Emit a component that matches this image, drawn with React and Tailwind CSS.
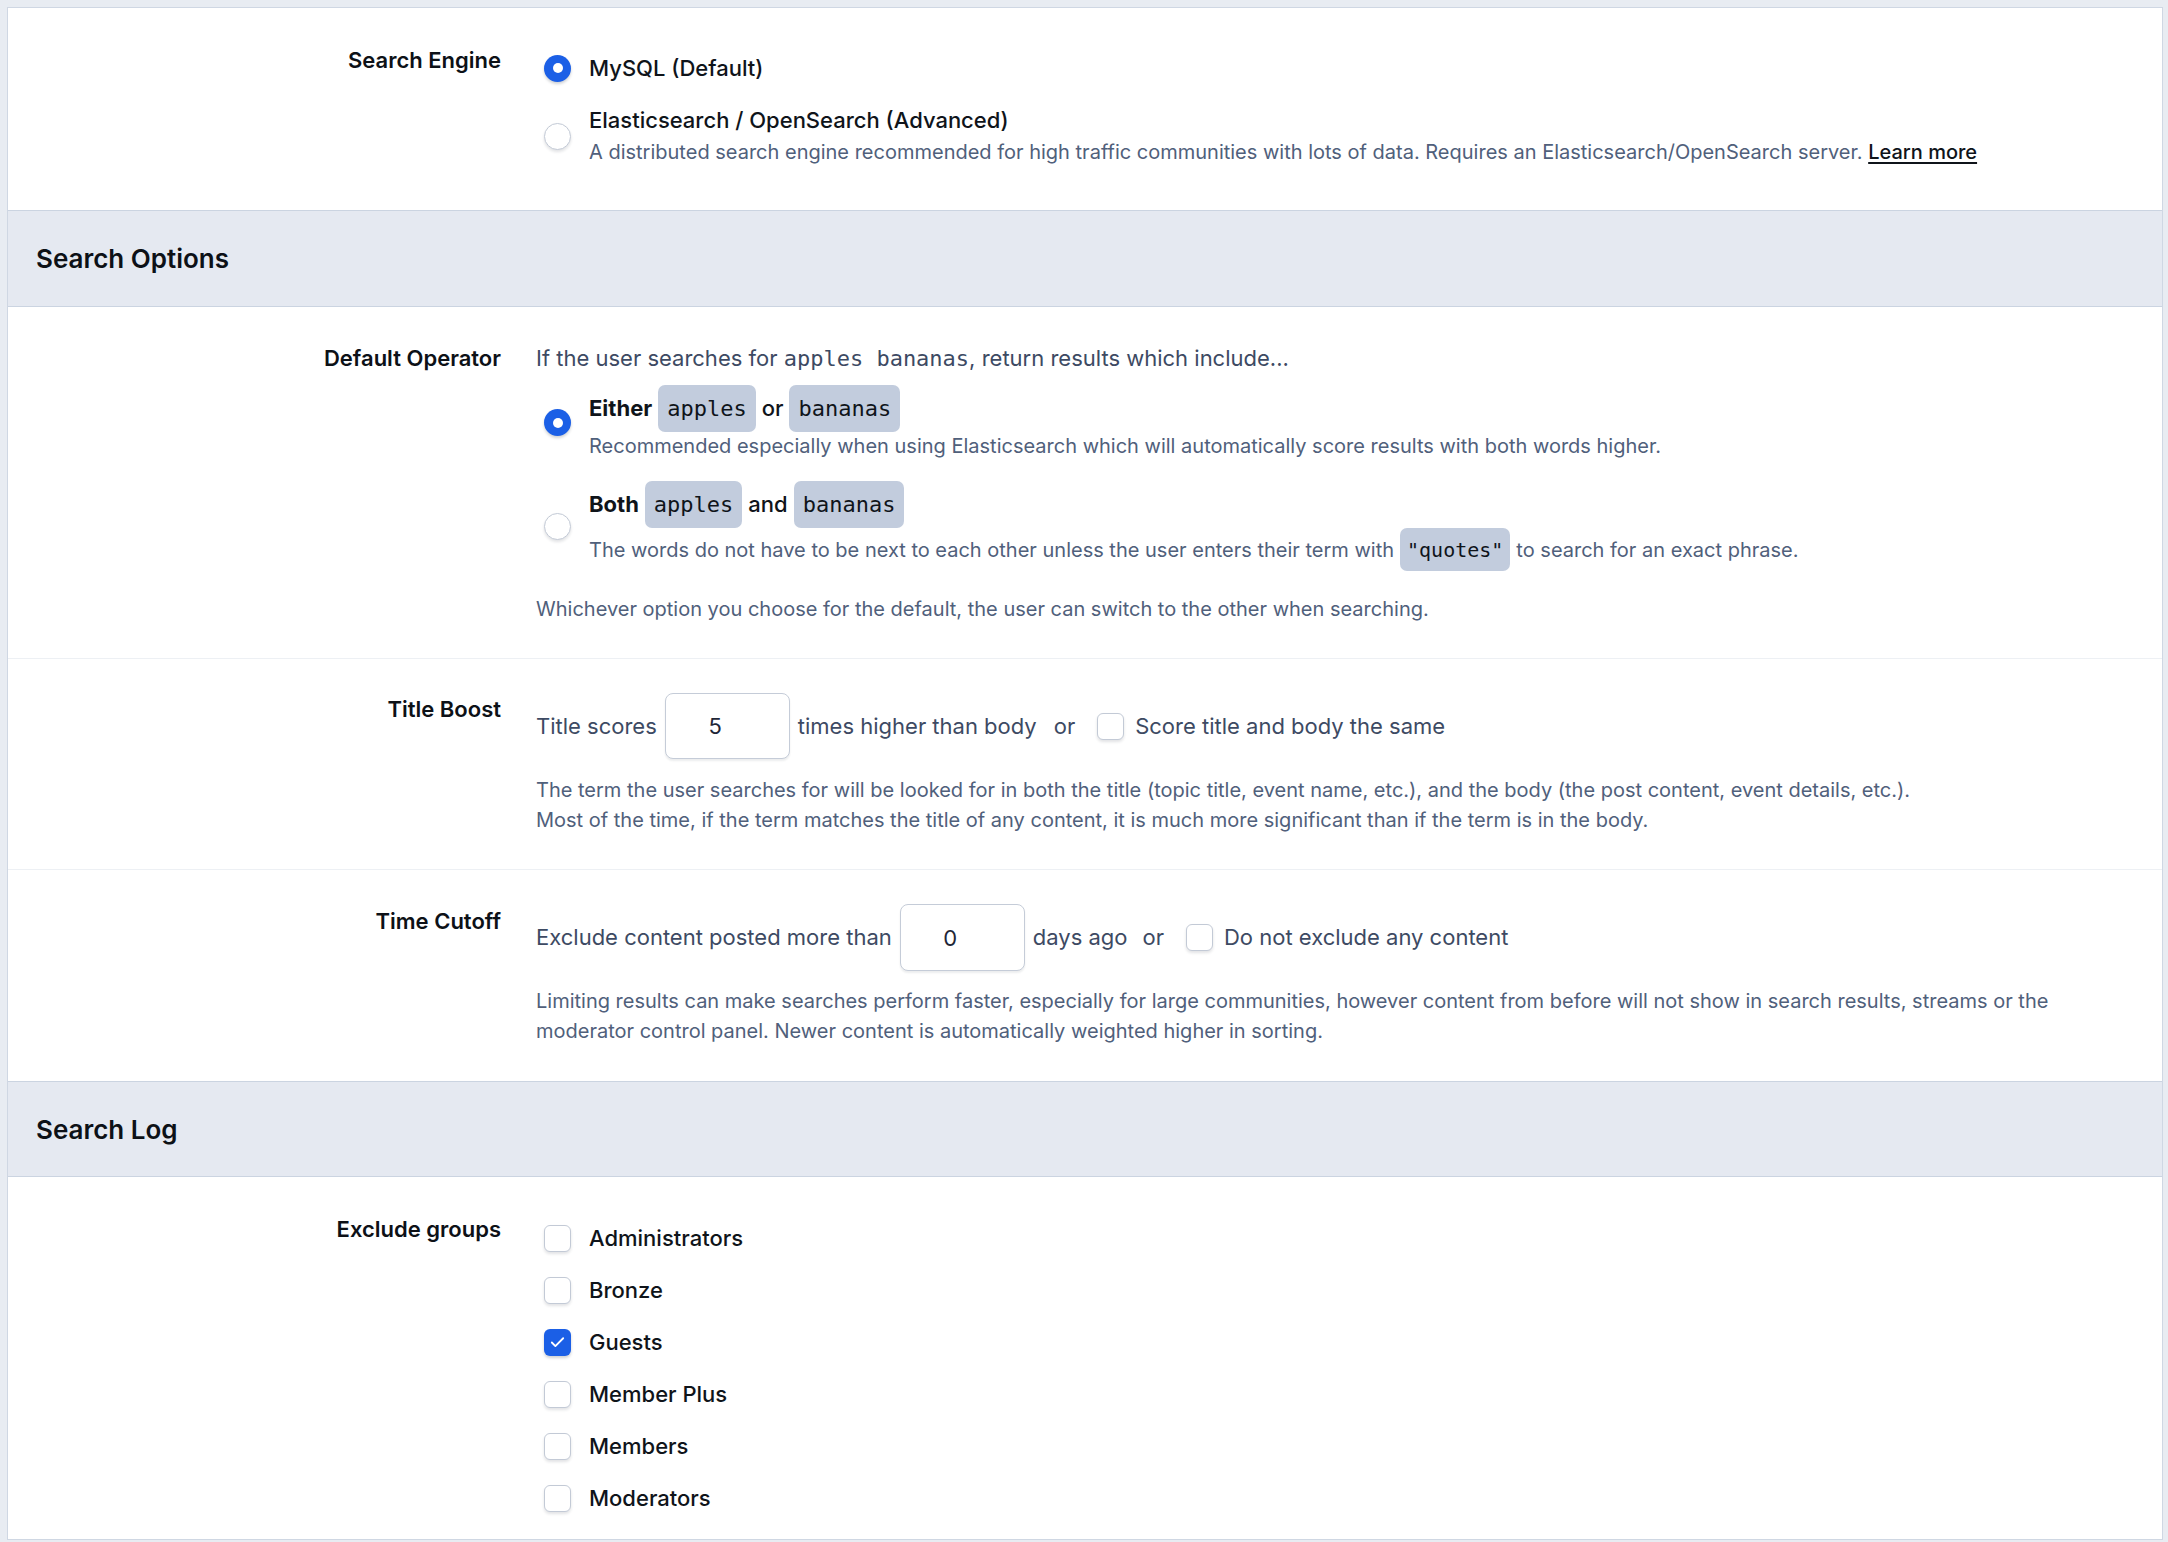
import React from "react";
import { Check } from "lucide-react";

const FONT = { fontFamily: "Inter, 'Noto Sans', sans-serif" };
const MONO = { fontFamily: "'DejaVu Sans Mono', monospace" };

function Radio({ checked }) {
  if (checked) {
    return (
      <span className="flex h-[27px] w-[27px] shrink-0 items-center justify-center rounded-full bg-[#1b5fe6] shadow-[0_2px_3px_rgba(15,23,42,0.2)]">
        <span className="h-[10px] w-[10px] rounded-full bg-white" />
      </span>
    );
  }
  return (
    <span className="h-[27px] w-[27px] shrink-0 rounded-full border border-[#c3cad6] bg-white shadow-[0_2px_3px_rgba(15,23,42,0.12)]" />
  );
}

function Checkbox({ checked }) {
  if (checked) {
    return (
      <span className="flex h-[27px] w-[27px] shrink-0 items-center justify-center rounded-[6px] bg-[#1b5fe6] shadow-[0_2px_3px_rgba(15,23,42,0.2)]">
        <Check size={17} strokeWidth={2.6} className="text-white" />
      </span>
    );
  }
  return (
    <span className="block h-[27px] w-[27px] shrink-0 rounded-[6px] border border-[#c3cad6] bg-white shadow-[0_2px_3px_rgba(15,23,42,0.12)]" />
  );
}

function Chip({ children }) {
  return (
    <span
      className="mx-[6px] inline-flex h-[47px] items-center rounded-[7px] bg-[#c2ccdd] px-[9px] text-[22px] font-normal text-[#0f141a]"
      style={MONO}
    >
      {children}
    </span>
  );
}

function Label({ children, className = "" }) {
  return (
    <div className={`w-[493px] shrink-0 text-right text-[22px] font-semibold leading-[30px] text-[#0d1117] ${className}`}>
      {children}
    </div>
  );
}

function NumberBox({ value, tall }) {
  return (
    <input
      readOnly
      defaultValue={value}
      className={`mx-[8px] w-[125px] shrink-0 ${tall ? "h-[67px]" : "h-[66px]"} rounded-[8px] border border-[#c5ccd8] bg-white pr-[24px] text-center text-[22px] text-[#1e2637] shadow-[0_2px_2px_rgba(15,23,42,0.08)] outline-none`}
    />
  );
}

function SectionHeader({ title, top }) {
  return (
    <div className={`flex h-[96px] items-center border-b border-[#cbd4e1] bg-[#e5e9f1] pl-[28px] ${top ? "border-t" : ""}`}>
      <h2 className="text-[26px] font-semibold text-[#0d1117]">{title}</h2>
    </div>
  );
}

const groups = [
  { name: "Administrators", checked: false },
  { name: "Bronze", checked: false },
  { name: "Guests", checked: true },
  { name: "Member Plus", checked: false },
  { name: "Members", checked: false },
  { name: "Moderators", checked: false },
];

export default function App() {
  return (
    <div className="min-h-screen bg-[#e8ecf2] pl-[7px] pr-[5px] pt-[7px]" style={FONT}>
      <div className="border border-b border-[#cfd7e3] bg-white">

        {/* search engine choice */}
        <div className="flex border-b border-[#cbd4e1] pb-[43px] pt-[37px]">
          <Label>Search Engine</Label>
          <div className="ml-[43px] mt-[5px] flex-1">
            <div className="flex h-[36px] items-center gap-[18px]">
              <Radio checked />
              <span className="text-[22px] font-medium text-[#0f141a]">MySQL (Default)</span>
            </div>
            <div className="mt-[19px] flex items-center gap-[18px]">
              <Radio />
              <div>
                <div className="text-[22px] font-medium leading-[30px] text-[#0f141a]">
                  Elasticsearch / OpenSearch (Advanced)
                </div>
                <div className="mt-[2px] text-[20px] leading-[30px] text-[#50607b]">
                  A distributed search engine recommended for high traffic communities with lots of data. Requires an
                  Elasticsearch/OpenSearch server.{" "}
                  <a className="font-medium text-[#0f141a] underline underline-offset-[3px]">Learn more</a>
                </div>
              </div>
            </div>
          </div>
        </div>

        <SectionHeader title="Search Options" />

        {/* default operator */}
        <div className="flex border-b border-[#edf0f4] pb-[34px] pt-[36px]">
          <Label>Default Operator</Label>
          <div className="ml-[35px] flex-1">
            <div className="text-[22px] leading-[30px] text-[#3d4a63]">
              If the user searches for{" "}
              <code className="text-[22px]" style={MONO}>
                apples bananas
              </code>
              , return results which include...
            </div>

            <div className="ml-[8px] mt-[11px] flex items-center gap-[18px]">
              <Radio checked />
              <div>
                <div className="flex h-[47px] items-center text-[22px] text-[#0f141a]">
                  <span className="font-bold">Either</span>
                  <Chip>apples</Chip>
                  <span className="font-medium">or</span>
                  <Chip>bananas</Chip>
                </div>
                <div className="text-[20px] leading-[28px] text-[#50607b]">
                  Recommended especially when using Elasticsearch which will automatically score results with both words higher.
                </div>
              </div>
            </div>

            <div className="ml-[8px] mt-[21px] flex items-center gap-[18px]">
              <Radio />
              <div>
                <div className="flex h-[47px] items-center text-[22px] text-[#0f141a]">
                  <span className="font-bold">Both</span>
                  <Chip>apples</Chip>
                  <span className="font-medium">and</span>
                  <Chip>bananas</Chip>
                </div>
                <div className="flex h-[43px] items-center text-[20px] text-[#50607b]">
                  The words do not have to be next to each other unless the user enters their term with
                  <span
                    className="mx-[6px] inline-flex h-[43px] items-center rounded-[7px] bg-[#c2ccdd] px-[7px] text-[20px] text-[#0f141a]"
                    style={MONO}
                  >
                    "quotes"
                  </span>
                  to search for an exact phrase.
                </div>
              </div>
            </div>

            <div className="mt-[23px] text-[20px] leading-[30px] text-[#50607b]">
              Whichever option you choose for the default, the user can switch to the other when searching.
            </div>
          </div>
        </div>

        {/* title boost */}
        <div className="flex border-b border-[#edf0f4] pb-[34px] pt-[34px]">
          <Label className="mt-[1px]">Title Boost</Label>
          <div className="ml-[35px] flex-1">
            <div className="flex h-[66px] items-center text-[22px] text-[#3d4a63]">
              <span>Title scores</span>
              <NumberBox value="5" />
              <span>times higher than body</span>
              <span className="ml-[17px]">or</span>
              <span className="ml-[22px] mr-[11px] flex">
                <Checkbox />
              </span>
              <span>Score title and body the same</span>
            </div>
            <div className="mt-[16px] text-[20px] leading-[30px] text-[#50607b]">
              The term the user searches for will be looked for in both the title (topic title, event name, etc.), and the body (the post content, event details, etc.).
              <br />
              Most of the time, if the term matches the title of any content, it is much more significant than if the term is in the body.
            </div>
          </div>
        </div>

        {/* time cutoff */}
        <div className="flex pb-[35px] pt-[34px]">
          <Label className="mt-[2px]">Time Cutoff</Label>
          <div className="ml-[35px] flex-1">
            <div className="flex h-[67px] items-center text-[22px] text-[#3d4a63]">
              <span>Exclude content posted more than</span>
              <NumberBox value="0" tall />
              <span>days ago</span>
              <span className="ml-[15px]">or</span>
              <span className="ml-[22px] mr-[11px] flex">
                <Checkbox />
              </span>
              <span>Do not exclude any content</span>
            </div>
            <div className="mt-[15px] max-w-[1540px] text-[20px] leading-[30px] text-[#50607b]">
              Limiting results can make searches perform faster, especially for large communities, however content from before will not show in search results, streams or the moderator control panel. Newer content is automatically weighted higher in sorting.
            </div>
          </div>
        </div>

        <SectionHeader title="Search Log" top />

        {/* search log groups */}
        <div className="flex pb-[15px] pt-[35px]">
          <Label className="mt-[2px]">Exclude groups</Label>
          <div className="ml-[43px] flex-1">
            {groups.map((g) => (
              <div key={g.name} className="flex h-[52px] items-center gap-[18px]">
                <Checkbox checked={g.checked} />
                <span className="text-[22px] font-medium text-[#0f141a]">{g.name}</span>
              </div>
            ))}
          </div>
        </div>
      </div>
    </div>
  );
}
